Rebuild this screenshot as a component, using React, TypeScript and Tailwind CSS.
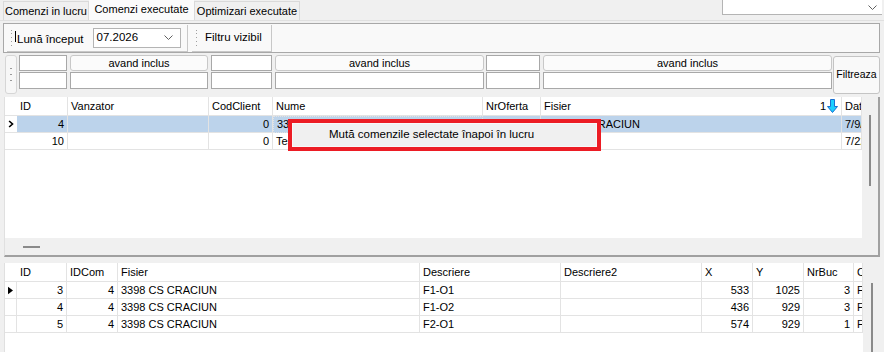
import React from "react";

type Col = { label: string; cls: string; right?: boolean };

const topCols: Col[] = [
  { label: "ID", cls: "w-[51px]", right: true },
  { label: "Vanzator", cls: "w-[141px]" },
  { label: "CodClient", cls: "w-[64px]", right: true },
  { label: "Nume", cls: "w-[210px]" },
  { label: "NrOferta", cls: "w-[58px]" },
  { label: "Fisier", cls: "w-[301px]" },
  { label: "Dat", cls: "w-[20px]" },
];

const topRows = [
  ["4", "", "0", "3398 CS CRACIUN", "", "3398 CS CRACIUN", "7/9/2026"],
  ["10", "", "0", "Test", "", "", "7/22/2026"],
];

const botCols: Col[] = [
  { label: "ID", cls: "w-[50px]", right: true },
  { label: "IDCom", cls: "w-[51px]", right: true },
  { label: "Fisier", cls: "w-[302px]" },
  { label: "Descriere", cls: "w-[141px]" },
  { label: "Descriere2", cls: "w-[141px]" },
  { label: "X", cls: "w-[51px]", right: true },
  { label: "Y", cls: "w-[51px]", right: true },
  { label: "NrBuc", cls: "w-[50px]", right: true },
  { label: "C", cls: "w-[9px]" },
];

const botRows = [
  ["3", "4", "3398 CS CRACIUN", "F1-O1", "", "533", "1025", "3", "F"],
  ["4", "4", "3398 CS CRACIUN", "F1-O2", "", "436", "929", "3", "F"],
  ["5", "4", "3398 CS CRACIUN", "F2-O1", "", "574", "929", "1", "F"],
];

const cell =
  "flex-none flex items-center overflow-hidden whitespace-nowrap border-r border-b border-[#e3e3e3] px-[3px]";

export default function App() {
  return (
    <div className="relative h-[352px] w-[884px] overflow-hidden bg-[#f0f0f0] font-['Liberation_Sans',Arial,sans-serif] text-[11px] text-black">
      {/* tabs */}
      <div className="flex h-[21px] items-end border-b border-[#e0e0e0]">
        <div className="ml-[3px] flex h-[19px] w-[86px] items-center justify-center border border-b-0 border-[#dadada] bg-[#f0f0f0] text-[11px]">
          Comenzi in lucru
        </div>
        <div className="flex h-[21px] w-[105px] items-center justify-center bg-[#fbfbfb] text-[11px]">
          Comenzi executate
        </div>
        <div className="flex h-[19px] w-[106px] items-center justify-center border border-b-0 border-[#dadada] bg-[#f0f0f0] text-[11px]">
          Optimizari executate
        </div>
        <div className="mb-auto ml-auto mr-[2px] flex h-[15px] w-[160px] items-center justify-end border-b border-l border-[#b4b4b4] bg-white pr-[5px]">
          <Chevron />
        </div>
      </div>

      {/* toolbar */}
      <div className="ml-[3px] mt-[2px] flex h-[30px] w-[877px] items-center border border-[#a8a8a8] bg-[#f9f9f9]">
        <div className="ml-[3px] flex h-[27px] w-[181px] items-center border-b border-r border-[#c8c8c8]">
          <Grip />
          <div className="ml-[3px] mt-[5px] flex items-center text-[11.5px]">
            <span className="mr-[1px] h-[11px] w-px self-start bg-black" />
            Lună început
          </div>
          <div className="ml-[9px] flex h-[20px] w-[88px] items-center justify-between border border-[#b4b4b4] bg-white pl-[3px] pr-[7px] text-[11.5px]">
            07.2026
            <Chevron />
          </div>
        </div>
        <div className="ml-[4px] flex h-[27px] w-[80px] items-center border-b border-r border-[#c8c8c8]">
          <Grip />
          <span className="ml-[8px] text-[11.5px]">Filtru vizibil</span>
        </div>
      </div>

      {/* filter row */}
      <div className="ml-[5px] mt-[2px] flex h-[41px]">
        <div className="flex h-[39px] w-[12px] flex-col items-center justify-center gap-[5px] rounded-[3px] border border-[#d6d6d6] bg-[#f7f7f7]">
          <span className="h-[1px] w-[2px] bg-[#9a9a9a]" />
          <span className="h-[1px] w-[2px] bg-[#9a9a9a]" />
          <span className="h-[1px] w-[2px] bg-[#9a9a9a]" />
        </div>
        <FilterPair cls="ml-[2px] w-[48px]" />
        <FilterPair cls="ml-[3px] w-[138px]" label />
        <FilterPair cls="ml-[3px] w-[61px]" />
        <FilterPair cls="ml-[3px] w-[209px]" label />
        <FilterPair cls="ml-[2px] w-[54px]" />
        <FilterPair cls="ml-[3px] w-[289px]" label />
        <div className="ml-[1px] mt-[1px] flex h-[38px] w-[47px] items-center justify-center rounded-[3px] border border-[#c4c4c4] bg-[#f9f9f9] text-[10.5px]">
          Filtreaza
        </div>
      </div>

      {/* top grid */}
      <div className="relative ml-[4px] mt-[1px] flex h-[160px] w-[876px] border-b-2 border-l border-r-2 border-[#a0a0a0] border-l-[#e0e0e0] bg-[#f0f0f0]">
        <div className="flex w-[858px] flex-col">
          <div className="flex h-[141px] flex-col bg-white">
            <div className="flex h-[19px]">
              <div className={`${cell} w-[12px] border-r-0`} />
              {topCols.map((c) => (
                <div key={c.label} className={`${cell} ${c.cls}`}>
                  {c.label === "Fisier" ? (
                    <div className="flex w-full items-center justify-between">
                      <span>Fisier</span>
                      <span className="flex items-center gap-[1px]">
                        1
                        <SortArrow />
                      </span>
                    </div>
                  ) : (
                    c.label
                  )}
                </div>
              ))}
            </div>
            {topRows.map((r, i) => (
              <div key={i} className="flex h-[17px]">
                <div className={`${cell} w-[12px] justify-center border-r-0 px-0`}>
                  {i === 0 && <RowChevron />}
                </div>
                {topCols.map((c, j) => (
                  <div
                    key={j}
                    className={`${cell} ${c.cls} ${c.right ? "justify-end" : ""} ${
                      i === 0 ? "bg-[#bcd3eb]" : ""
                    } ${i === 0 && j === 3 ? "border border-dotted border-[#3a3a3a]" : ""}`}
                  >
                    {r[j]}
                  </div>
                ))}
              </div>
            ))}
          </div>
          <div className="flex h-[17px] items-center bg-[#f0f0f0] pl-[18px]">
            <span className="h-[2px] w-[17px] bg-[#8a8a8a]" />
          </div>
        </div>
        <div className="flex w-[16px] justify-center pt-[18px]">
          <span className="ml-[-1px] h-[71px] w-[2px] bg-[#8a8a8a]" />
        </div>
      </div>

      {/* bottom grid */}
      <div className="ml-[4px] mt-[6px] flex h-[90px] w-[876px] border-l border-[#e0e0e0] bg-white">
        <div className="flex w-[859px] flex-col">
          <div className="flex h-[19px]">
            <div className={`${cell} w-[12px] border-r-0`} />
            {botCols.map((c) => (
              <div key={c.label} className={`${cell} ${c.cls}`}>
                {c.label}
              </div>
            ))}
          </div>
          {botRows.map((r, i) => (
            <div key={i} className="flex h-[17px]">
              <div className={`${cell} w-[12px] justify-center px-0`}>
                {i === 0 && (
                  <svg width="6" height="9" viewBox="0 0 6 9" aria-hidden>
                    <path d="M0 0 L6 4.5 L0 9 Z" fill="#000" />
                  </svg>
                )}
              </div>
              {botCols.map((c, j) => (
                <div
                  key={j}
                  className={`${cell} ${c.cls} ${c.right ? "justify-end" : ""}`}
                >
                  {r[j]}
                </div>
              ))}
            </div>
          ))}
        </div>
        <div className="flex w-[17px] justify-center bg-[#f0f0f0] pt-[20px]">
          <span className="h-[70px] w-[2px] bg-[#8a8a8a]" />
        </div>
      </div>

      {/* context menu, highlighted */}
      <div className="absolute left-[288px] top-[119px] h-[32px] w-[313px] border-4 border-[#ec1c24] bg-[#f0f0f0]">
        <div className="flex h-full items-center border border-[#f8f8f8] pl-[36px] text-[11.5px]">
          Mută comenzile selectate înapoi în lucru
        </div>
      </div>
    </div>
  );
}

function FilterPair({ cls, label }: { cls: string; label?: boolean }) {
  return (
    <div className={`flex flex-none flex-col ${cls}`}>
      {label ? (
        <div className="flex h-[16px] items-center justify-center rounded-[3px] border border-[#c8c8c8] bg-[#fbfbfb]">
          avand inclus
        </div>
      ) : (
        <div className="h-[16px] border border-[#a8a8a8] bg-white" />
      )}
      <div className="mt-px h-[17px] border border-[#a8a8a8] bg-white" />
    </div>
  );
}

function Grip() {
  return (
    <div className="ml-[4px] flex h-[20px] flex-col justify-between py-[2px]">
      {[0, 1, 2, 3, 4].map((i) => (
        <span key={i} className="h-[1px] w-[1px] bg-[#a0a0a0]" />
      ))}
    </div>
  );
}

function Chevron() {
  return (
    <svg width="9" height="5" viewBox="0 0 9 5" fill="none" aria-hidden>
      <path d="M0.5 0.5 L4.5 4.5 L8.5 0.5" stroke="#606060" strokeWidth="1" />
    </svg>
  );
}

function RowChevron() {
  return (
    <svg width="8" height="10" viewBox="0 0 8 10" fill="none" aria-hidden>
      <path d="M1.5 1 L6 5 L1.5 9" stroke="#000" strokeWidth="2.2" />
    </svg>
  );
}

function SortArrow() {
  return (
    <svg width="11" height="14" viewBox="0 0 11 14" aria-hidden>
      <path
        d="M3.5 0.5 H7.5 V7.5 H10.5 L5.5 13.5 L0.5 7.5 H3.5 Z"
        fill="#1ad0ff"
        stroke="#1a6fd0"
        strokeWidth="1"
      />
    </svg>
  );
}
